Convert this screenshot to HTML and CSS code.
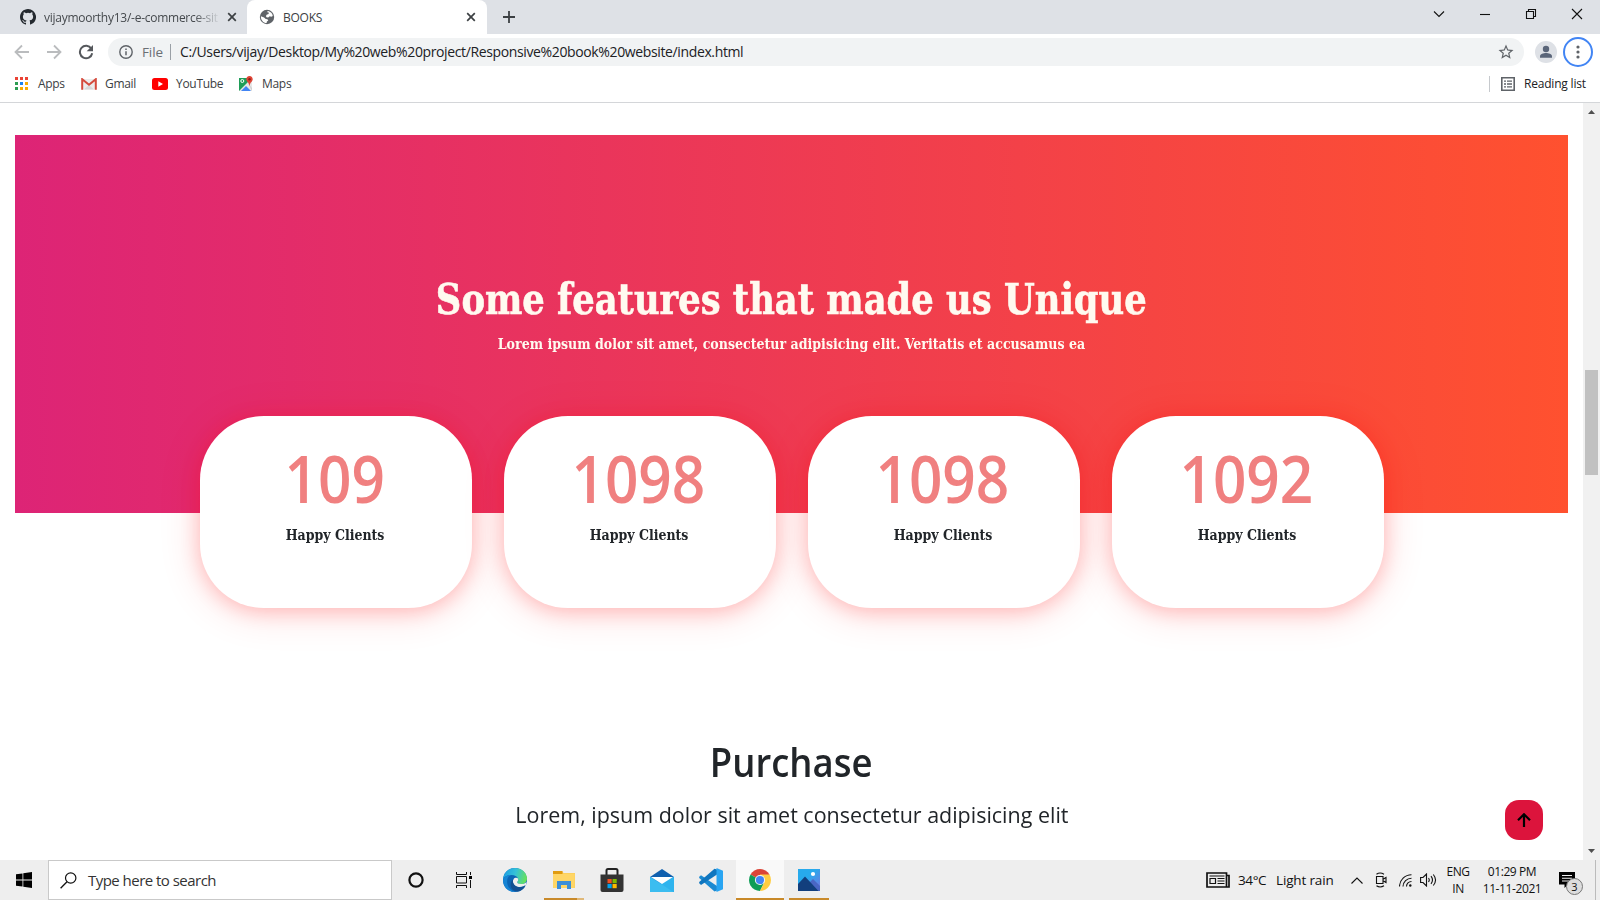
FILE: index.html
```html
<!DOCTYPE html>
<html lang="en">
<head>
<meta charset="utf-8">
<title>BOOKS</title>
<link rel="stylesheet" href="styles.css">
</head>
<body>
<div class="screen">
  <header class="tabstrip">
    <div class="tab tab-idle">
      <svg class="fav" viewBox="0 0 16 16"><path fill="#24292f" d="M8 0C3.58 0 0 3.58 0 8c0 3.54 2.29 6.53 5.47 7.59.4.07.55-.17.55-.38v-1.49c-2.23.49-2.69-.94-2.69-.94-.36-.92-.89-1.17-.89-1.17-.73-.5.05-.49.05-.49.8.06 1.23.83 1.23.83.71 1.22 1.87.87 2.33.66.07-.52.28-.87.5-1.07-1.77-.2-3.64-.89-3.64-3.95 0-.87.31-1.59.82-2.15-.08-.2-.36-1.02.08-2.12 0 0 .67-.21 2.2.82a7.6 7.6 0 0 1 4 0c1.53-1.04 2.2-.82 2.2-.82.44 1.1.16 1.92.08 2.12.51.56.82 1.27.82 2.15 0 3.07-1.87 3.75-3.65 3.95.29.25.54.73.54 1.48v2.2c0 .21.15.46.55.38A8 8 0 0 0 8 0z"/></svg>
      <span class="tab-title tab-fade">vijaymoorthy13/-e-commerce-sit</span>
      <svg class="x" viewBox="0 0 10 10"><path d="M1.2 1.2l7.6 7.6M8.8 1.2L1.2 8.8"/></svg>
    </div>
    <div class="tab tab-active">
      <svg class="fav" viewBox="0 0 16 16"><circle cx="8" cy="8" r="7.2" fill="#5f6368"/><path fill="#fff" d="M8.6 1.9c1.8.2 3.6 1.3 4.6 3l.6 2-1.5.9-1.700-.5-.8 1-1.900.2-1-1.200.7-1.500 2-.7.2-1.500-1.500-.3zM1.900 7.200l3.200 1.300 1.600 1.400 1.700.3.900 1.400-1.400 1-.3 1.500C4.300 13.900 1.700 11 1.900 7.200z"/></svg>
      <span class="tab-title">BOOKS</span>
      <svg class="x" viewBox="0 0 10 10"><path d="M1.2 1.2l7.6 7.6M8.8 1.2L1.2 8.800"/></svg>
    </div>
    <svg class="plus" viewBox="0 0 12 12"><path d="M6 0v12M0 6h12"/></svg>
    <div class="winctl">
      <svg width="12" height="12" viewBox="0 0 12 12"><path d="M1 3.500l5 5 5-5"/></svg>
      <svg width="12" height="12" viewBox="0 0 12 12"><path d="M1 6.500h10"/></svg>
      <svg width="12" height="12" viewBox="0 0 12 12"><path d="M1.500 3.500h7v7h-7zM3.500 3.500v-2h7v7h-2"/></svg>
      <svg width="12" height="12" viewBox="0 0 12 12"><path d="M1 1l10 10M11 1L1 11"/></svg>
    </div>
  </header>

  <div class="toolbar">
    <svg class="nav" viewBox="0 0 16 16"><path d="M15 8H2M8 1.500L1.500 8 8 14.500" stroke="#babcbe"/></svg>
    <svg class="nav" viewBox="0 0 16 16"><path d="M1 8h13M8 1.500L14.500 8 8 14.500" stroke="#babcbe"/></svg>
    <svg class="nav" viewBox="0 0 16 16"><path d="M13.300 4.600A6.200 6.200 0 1 0 14.200 9.200" stroke="#55585c" stroke-width="2"/><path d="M15 1v6.300H8.700z" fill="#55585c"/></svg>
    <div class="omnibox">
      <svg width="14" height="14" viewBox="0 0 14 14"><circle cx="7" cy="7" r="6.200" fill="none" stroke="#5f6368" stroke-width="1.400"/><path d="M7 6.200v4M7 3.600v1.500" stroke="#5f6368" stroke-width="1.500"/></svg>
      <span class="scheme">File</span><i class="sep"></i>
      <span class="url">C:/Users/vijay/Desktop/My%20web%20project/Responsive%20book%20website/index.html</span>
      <svg class="star" viewBox="0 0 24 24"><path fill="#5f6368" d="M22 9.240l-7.190-.62L12 2 9.190 8.630 2 9.240l5.460 4.730L5.820 21 12 17.270 18.180 21l-1.630-7.030L22 9.240zM12 15.400l-3.760 2.270 1-4.280-3.320-2.880 4.380-.38L12 6.100l1.710 4.040 4.380.38-3.320 2.880 1 4.280L12 15.400z"/></svg>
    </div>
    <svg class="avatar" viewBox="0 0 22 22"><circle cx="11" cy="11" r="11" fill="#dee1e6"/><circle cx="11" cy="8" r="3.200" fill="#5a6579"/><path d="M5 16.800v-1.500c0-2.200 3.500-3.300 6-3.300s6 1.100 6 3.300v1.500z" fill="#5a6579"/></svg>
    <span class="menu"><svg width="4" height="14" viewBox="0 0 4 14"><g fill="#5f6368"><circle cx="2" cy="2" r="1.600"/><circle cx="2" cy="7" r="1.600"/><circle cx="2" cy="12" r="1.600"/></g></svg></span>
  </div>

  <div class="bookmarks">
    <svg class="bm-apps" viewBox="0 0 13 13"><path fill="#ea4335" d="M0 0h3v3H0zM5 0h3v3H5zM10 0h3v3h-3z"/><path fill="#2c9c51" d="M0 5h3v3H0zM0 10h3v3H0z"/><path fill="#1a82f0" d="M5 5h3v3H5z"/><path fill="#f9ab00" d="M10 5h3v3h-3zM5 10h3v3H5zM10 10h3v3h-3z"/></svg>
    <span class="w-apps">Apps</span>
    <svg width="16" height="12" viewBox="0 0 16 12"><path d="M1 1h14v10.500H1z" fill="#ececec"/><path d="M3 11.500L8 7l5 4.500z" fill="#d8d8d8"/><path d="M1.200 11.800V1.200L8 6.800l6.800-5.600v10.600" fill="none" stroke="#d54b3d" stroke-width="2"/></svg>
    <span class="w-gmail">Gmail</span>
    <svg width="16" height="12" viewBox="0 0 16 12"><rect width="16" height="12" rx="2.500" fill="#f00"/><path d="M6.300 3.300v5.400L11 6z" fill="#fff"/></svg>
    <span class="w-yt">YouTube</span>
    <svg width="16" height="16" viewBox="0 0 16 16"><path d="M1 2h13v13H1z" fill="#1f9d58"/><path d="M1 15L12 4l2 1.500V15z" fill="#e8e8e8"/><path d="M3 15l5-5 5 5z" fill="#4285f4"/><path d="M10 7l4 5v3z" fill="#cfcfcf"/><circle cx="4.300" cy="5" r="1.500" fill="none" stroke="#fff"/><path d="M11.500 0C9.500 0 8.300 1.500 8.300 3.200c0 2.200 2.700 3 3.200 7 .5-4 3.200-4.800 3.200-7C14.700 1.500 13.500 0 11.500 0z" fill="#e04335"/><circle cx="11.500" cy="3.300" r="1.200" fill="#8c1f17"/></svg>
    <span>Maps</span>
    <i class="bm-sep"></i>
    <svg class="bm-read" viewBox="0 0 14 14"><path d="M.8.8h12.400v12.400H.8z" fill="none" stroke="#5f6368" stroke-width="1.600"/><path d="M3 4.200h2M6 4.200h5M3 7h2M6 7h5M3 9.800h2M6 9.800h5" stroke="#5f6368" stroke-width="1.300"/></svg>
    <span class="w-read">Reading list</span>
  </div>

  <div class="viewport">
    <main class="page">
      <section class="hero">
        <h1>Some features that made us Unique</h1>
        <p>Lorem ipsum dolor sit amet, consectetur adipisicing elit. Veritatis et accusamus ea</p>
      </section>
      <section class="cards">
        <div class="card"><b>109</b><span>Happy Clients</span></div>
        <div class="card"><b>1098</b><span>Happy Clients</span></div>
        <div class="card"><b>1098</b><span>Happy Clients</span></div>
        <div class="card"><b>1092</b><span>Happy Clients</span></div>
      </section>
      <section class="purchase">
        <h2>Purchase</h2>
        <p>Lorem, ipsum dolor sit amet consectetur adipisicing elit</p>
      </section>
      <a class="to-top"><svg width="14" height="14" viewBox="0 0 14 14"><path d="M7 14V1.500M1 7.300l6-6 6 6" fill="none" stroke="#000" stroke-width="2.200"/></svg></a>
    </main>
    <div class="scrollbar">
      <svg width="7" height="4" viewBox="0 0 7 4"><path d="M0 4L3.500 0 7 4z" fill="#505050"/></svg>
      <i class="thumb"></i>
      <svg width="7" height="4" viewBox="0 0 7 4"><path d="M0 0l3.500 4L7 0z" fill="#505050"/></svg>
    </div>
  </div>

  <footer class="taskbar">
    <div class="start"><svg width="16" height="16" viewBox="0 0 16 16"><path d="M0 2.300L6.500 1.400v6.200H0zM7.300 1.300L16 0v7.600H7.300zM0 8.400h6.500v6.200L0 13.700zM7.300 8.400H16V16l-8.700-1.300z"/></svg></div>
    <div class="search"><svg width="17" height="17" viewBox="0 0 17 17"><circle cx="10.700" cy="6" r="5.200" fill="none" stroke="#111" stroke-width="1.200"/><path d="M7 9.700L.6 16.200" stroke="#111" stroke-width="1.300"/></svg><span>Type here to search</span></div>
    <div class="app"><svg width="16" height="16" viewBox="0 0 16 16"><circle cx="8" cy="8" r="6.600" fill="none" stroke="#111" stroke-width="2.200"/></svg></div>
    <div class="app"><svg width="17" height="16" viewBox="0 0 17 16"><path d="M.5 0v2.500h10V0M.5 16v-2.500h10V16M.5 4.500h10v6.500h-10zM14.500 0v3M14.500 8v8" fill="none" stroke="#111"/><path d="M13 4h3v3h-3z"/></svg></div>
    <div class="app app-edge"><svg width="24" height="24" viewBox="0 0 24 24"><defs><linearGradient id="eg" x1="0" y1=".3" x2="1" y2=".5"><stop offset="0" stop-color="#1b9de2"/><stop offset=".5" stop-color="#35c1d8"/><stop offset="1" stop-color="#66e25a"/></linearGradient></defs><circle cx="12" cy="12" r="12" fill="#0b65b5"/><path d="M0 11.500C.5 5 5.500 0 12 0s12 4.800 12 10.500c0 3.500-2.500 5.500-5.500 5.500-3 0-4.500-1-4.300-2 1-1 1.200-2.200.8-3.300C14.200 8.200 11.800 7 8.500 7 4.500 7 1.200 9 0 11.500z" fill="url(#eg)"/><path d="M0 12c1-3 4-5 7.500-5-3 2-3.800 5-3.200 8.500C5 19.500 8 22.800 12 24 5 24 0 19 0 12z" fill="#1684d4"/><path d="M15 10.500c-1.200-1.200-3.500-.8-4.500.700-1.800 2.800.5 7.300 5.500 7.800 2.800.2 5-.7 7-1.700l.5-3.300c-1.500 1.700-3.500 2-5.500 2-3.200 0-4.200-1.200-3.700-2.200 1-1 1.100-2.300.7-3.300z" fill="#eee"/><path d="M10.500 11.200c-1.800 2.800.5 8 6 8 2 0 3.500-.5 5.500-2l-.7 2.300C17 25 10 24.500 8 19c-1-3 0-6.300 2.500-7.800z" fill="#124f91"/></svg></div>
    <div class="app open"><svg width="22" height="18" viewBox="0 0 22 18"><path d="M0 0h9l1.500 2H22v15H0z" fill="#fcd05c"/><path d="M0 0h9.500v3H0z" fill="#e19c10"/><path d="M0 3h21.500v14H0z" fill="#ffd666"/><path d="M4 18v-8h14v8h-4v-4H8v4z" fill="#3d8fd8"/></svg></div>
    <div class="app"><svg width="24" height="25" viewBox="0 0 24 25"><path d="M6.500 7V2.500q0-1.500 1.500-1.500h8q1.500 0 1.500 1.500V7" fill="none" stroke="#222" stroke-width="2"/><path d="M.5 6.500h23V22q0 2-2 2h-19q-2 0-2-2z" fill="#333"/><path fill="#f25022" d="M7.500 11h4.200v4.200H7.500z"/><path fill="#7fba00" d="M12.500 11h4.200v4.200h-4.200z"/><path fill="#00a4ef" d="M7.500 16h4.200v4.200H7.500z"/><path fill="#ffb900" d="M12.500 16h4.200v4.200h-4.200z"/></svg></div>
    <div class="app app-mail"><svg width="24" height="23" viewBox="0 0 24 23"><path d="M0 8l12-8 12 8v3H0z" fill="#0f5fae"/><path d="M0 8h24v15H0z" fill="#2196e0"/><path d="M24 8v15L10 15z" fill="#2fb4ee"/><path d="M0 23L24 8v3L4 23z" fill="#2fb4ee"/><path d="M0 8l24 15H0z" fill="#3bbdf0"/><path d="M1 8h22l-11 7z" fill="#fff"/></svg></div>
    <div class="app app-code"><svg width="24" height="24" viewBox="0 0 24 24"><path d="M2 7.200L.2 8.800v1.300L15.500 23.500l2.500-1V18z" fill="#1c8ad2"/><path d="M2 17L.2 15.300V14L15.500.7 18 1.500V6.500z" fill="#0f76bf"/><path d="M17.500 0L24 2.800v18.500L17.500 24z" fill="#29a5f2"/></svg></div>
    <div class="app current"><svg width="22" height="22" viewBox="0 0 22 22"><path d="M11 11L1.500 5.500A11 11 0 0 1 20.500 5.500z" fill="#db4437"/><path d="M11 11L1.500 5.500A11 11 0 0 0 11 22l4.300-8.500z" fill="#0f9d58"/><path d="M11 11l4.300 2.500L11 22A11 11 0 0 0 20.500 5.500H11z" fill="#ffcd40"/><circle cx="11" cy="11" r="5.100" fill="#f4f4f4"/><circle cx="11" cy="11" r="4.100" fill="#4285f4"/></svg></div>
    <div class="app opened"><svg width="22" height="22" viewBox="0 0 22 22"><defs><linearGradient id="pg" x1="0" y1="0" x2="1" y2="1"><stop offset=".4" stop-color="#27aaec"/><stop offset="1" stop-color="#7a6fe0"/></linearGradient></defs><path d="M0 0h22v22H0z" fill="url(#pg)"/><path d="M11 14l4-4 7 7v5H11z" fill="#4a66c4"/><path d="M0 15l7-7.500L20.500 22H0z" fill="#123f7d"/><circle cx="15" cy="5" r="2.100" fill="#fff"/></svg></div>
    <div class="tray">
      <svg class="news" viewBox="0 0 24 16"><path d="M1 1h19.500v14H1zM20.500 3.500H23V15h-3" fill="none" stroke="#111" stroke-width="1.700"/><path d="M4 6.500h5.500v5H4zM11.500 6.500h7M11.500 9h7M11.500 11.500h7M3.500 4h15" fill="none" stroke="#111" stroke-width="1.200"/></svg>
      <span class="temp">34°C</span><span class="rain">Light rain</span>
      <svg class="up" viewBox="0 0 12 7"><path d="M.5 6.500l5.500-5.500 5.500 5.500"/></svg>
      <svg class="meet" viewBox="0 0 12 16"><path d="M1.500 4.500h6.500v7h-6.500zM8.500 7l2.500-1.500v5L8.500 9M1.500 2.200Q5 -.3 9 2.200M1.500 13.800Q5 16.300 9 13.800"/></svg>
      <svg class="wifi" viewBox="0 0 13 13"><path d="M.5 12.500A12 12 0 0 1 12.500.8M4 12.500A8.500 8.500 0 0 1 12.500 4.200M7.500 12.500A5 5 0 0 1 12.500 7.500"/><circle cx="11.300" cy="11.500" r="1.200" fill="#111" stroke="none"/></svg>
      <svg class="vol" viewBox="0 0 17 14"><path d="M.6 4.500h2.400L6.500 1v12L3 9.500H.6zM8.500 5q1.500 2 0 4M11 3.200q3 3.800 0 7.600M13.300 1.500q4.500 5.500 0 11"/></svg>
      <div class="two lang"><span>ENG</span><span>IN</span></div>
      <div class="two clock"><span>01:29 PM</span><span>11-11-2021</span></div>
      <div class="notes"><svg width="16" height="16" viewBox="0 0 16 16"><path d="M0 0h16v12.500H9L5.500 16v-3.500H0z"/><path d="M3 3h10v1H3zM3 5.800h10v1H3zM3 8.500h7v1H3z" fill="#eee"/></svg><span class="badge">3</span></div>
      <i class="peek"></i>
    </div>
  </footer>
</div>
</body>
</html>
```

FILE: styles.css
```css
* { box-sizing: border-box; }
body { margin: 0; font-family: "Open Sans", "Noto Sans", sans-serif; color: #212529; background: #fff; }
svg { display: block; flex: none; }
span { white-space: nowrap; }
h1, h2, p { margin: 0; font-weight: 400; white-space: nowrap; }

.screen { width: 1600px; height: 900px; display: flex; flex-direction: column; overflow: hidden; }

/* Tab strip */
.tabstrip { height: 34px; background: #dee1e6; display: flex; align-items: center; flex: none; }
.tab { height: 34px; display: flex; align-items: center; font-size: 12px; color: #45494d; letter-spacing: -.25px; }
.tab-idle { width: 247px; padding-left: 20px; }
.tab-active { width: 240px; padding-left: 12px; background: #fff; border-radius: 8px 8px 0 0; color: #3c4043; }
.fav { width: 16px; height: 16px; }
.tab-title { width: 174px; margin-left: 8px; }
.tab-active .tab-title { width: 182px; margin-left: 8px; }
.tab-fade { letter-spacing: -.26px; -webkit-mask-image: linear-gradient(90deg, #000 150px, rgba(0, 0, 0, .1) 174px); mask-image: linear-gradient(90deg, #000 150px, rgba(0, 0, 0, .1) 174px); }
.x { width: 10px; height: 10px; margin-left: 9px; stroke: #3c4043; stroke-width: 1.7; }
.tab-active .x { margin-left: 1px; }
.plus { width: 12px; height: 12px; margin-left: 16px; stroke: #3c4043; stroke-width: 1.8; }
.winctl { margin: -6px 17px 0 auto; display: flex; gap: 34px; }
.winctl svg { fill: none; stroke: #111; stroke-width: 1.1; }

/* Toolbar */
.toolbar { height: 36px; display: flex; align-items: center; padding-left: 14px; flex: none; }
.nav { width: 16px; height: 16px; margin-right: 16px; fill: none; stroke-width: 1.8; }
.nav + .nav + .nav { margin-right: 14px; }
.omnibox { width: 1416px; height: 28px; border-radius: 14px; background: #f1f3f4; display: flex; align-items: center; padding: 0 11px; font-size: 14px; letter-spacing: -.37px; line-height: 28px; }
.scheme { width: 28px; margin-left: 9px; color: #6b6f74; font-size: 13.5px; letter-spacing: -.1px; }
.sep { width: 1px; height: 16px; background: #9aa0a6; }
.url { margin-left: 9px; color: #202124; }
.star { width: 18px; height: 18px; margin-left: auto; margin-right: -2px; }
.avatar { width: 22px; height: 22px; margin-left: 11px; }
.menu { width: 30px; height: 30px; margin-left: 6px; border: 2px solid #4285f4; border-radius: 50%; display: flex; align-items: center; justify-content: center; }

/* Bookmarks bar */
.bookmarks { height: 33px; padding: 0 13px 5px 15px; display: flex; align-items: center; border-bottom: 1px solid #d4d6d9; font-size: 12px; color: #3c4043; flex: none; letter-spacing: -.3px; }
.bookmarks span { margin-left: 8px; }
.bm-apps { width: 13px; height: 13px; margin-right: 2px; }
.w-apps { width: 43px; }
.w-gmail { width: 47px; }
.w-yt { width: 62px; }
.bm-sep { width: 1px; height: 16px; background: #c6c9cd; margin-left: auto; }
.bm-read { width: 14px; height: 14px; margin-left: 11px; }
.bookmarks .w-read { width: 63px; margin-left: 9px; color: #202124; letter-spacing: -.2px; }

/* Page content */
.viewport { height: 757px; display: flex; flex: none; }
.page { width: 1583px; position: relative; display: flex; flex-direction: column; align-items: center; padding-top: 32px; overflow: hidden; }
.hero { width: 1553px; height: 378px; flex: none; background: linear-gradient(90deg, #dd2476, #ff512f); color: #fffaf0; display: flex; flex-direction: column; align-items: center; padding-top: 136px; font-family: "DejaVu Serif Condensed", "DejaVu Serif", serif; }
.hero h1 { font-size: 43px; line-height: 56px; font-weight: 700; font-stretch: condensed; transform: scaleX(.913); -webkit-text-stroke: .6px #fffaf0; }
.hero p { font-size: 15px; line-height: 24px; margin-top: 5px; font-weight: 700; font-stretch: condensed; transform: scaleX(.934); }
.cards { display: flex; gap: 32px; margin-top: -97px; flex: none; }
.card { width: 272px; height: 192px; border-radius: 64px; background: #fff; box-shadow: 0 3px 20px rgba(255, 0, 0, .2), 0 4px 42px rgba(255, 0, 0, .16); display: flex; flex-direction: column; align-items: center; }
.card b { margin: 23px 2px 0 0; font-size: 65px; line-height: 78px; font-weight: 600; color: #f08080; transform: scaleX(.9); }
.card span { margin-top: 6px; font: 700 15px/24px "DejaVu Serif Condensed", "DejaVu Serif", serif; transform: scaleX(.93); }
.purchase { margin-top: 130px; display: flex; flex-direction: column; align-items: center; flex: none; }
.purchase h2 { font-size: 40px; line-height: 48px; font-weight: 600; transform: scaleX(.912); }
.purchase p { margin-top: 12px; font-size: 22.5px; line-height: 34px; transform: scaleX(.954); }
.to-top { position: absolute; right: 40px; bottom: 20px; width: 38px; height: 40px; border-radius: 14px; background: #dc143c; display: flex; align-items: center; justify-content: center; }
.scrollbar { width: 17px; background: #f1f1f1; display: flex; flex-direction: column; align-items: center; padding: 7px 0; }
.thumb { width: 13px; height: 105px; background: #c1c1c1; margin: 256px 0 auto; }

/* Taskbar */
.taskbar { height: 40px; background: #eee; display: flex; flex: none; }
.start { width: 48px; display: flex; align-items: center; justify-content: center; }
.search { width: 344px; border: 1px solid #c9c9c9; background: #fff; display: flex; align-items: center; padding-left: 11px; gap: 11px; font-size: 15px; letter-spacing: -.53px; color: #333; }
.app { width: 48px; display: flex; align-items: center; justify-content: center; }
.app-edge { width: 54px; margin-right: -3px; }
.open { border-bottom: 2px solid #c98a2a; padding-top: 2px; width: 40px; margin: 0 4px 0 5px; border-image: linear-gradient(90deg, #c98a2a 32px, #e0b878 32px) 2; }
.app-mail { margin-left: 2px; }
.app-code { margin-left: 1px; }
.current { margin-left: 1px; background: #f9f9f9; border-bottom: 2px solid #c98a2a; padding-top: 2px; }
.opened { width: 40px; margin-left: 5px; border-bottom: 2px solid #c98a2a; padding-top: 2px; }
.tray { margin-left: auto; display: flex; align-items: center; color: #111; }
.tray svg { fill: none; stroke: #111; stroke-width: 1.1; }
.news { width: 24px; height: 16px; }
.temp { width: 30px; margin-left: 8px; font-size: 13.5px; letter-spacing: -.4px; }
.rain { width: 59px; margin-left: 8px; font-size: 13.5px; letter-spacing: -.15px; }
.up { width: 12px; height: 7px; margin-left: 16px; }
.meet { width: 12px; height: 16px; margin-left: 12px; }
.wifi { width: 13px; height: 13px; margin-left: 12px; }
.vol { width: 17px; height: 14px; margin-left: 8px; }
.two { display: flex; flex-direction: column; align-items: center; font-size: 12px; line-height: 17px; letter-spacing: -.4px; }
.lang { width: 24px; margin-left: 9px; }
.clock { width: 60px; margin-left: 12px; }
.notes { position: relative; margin-left: 17px; width: 16px; }
.tray .notes svg { fill: #000; stroke: none; }
.badge { position: absolute; left: 7px; top: 6px; width: 17px; height: 17px; border-radius: 50%; border: 1px solid #777; background: #ddd; font-size: 11px; line-height: 15px; text-align: center; }
.peek { width: 1px; height: 40px; background: #bbb; margin: 0 4px 0 20px; }
```
